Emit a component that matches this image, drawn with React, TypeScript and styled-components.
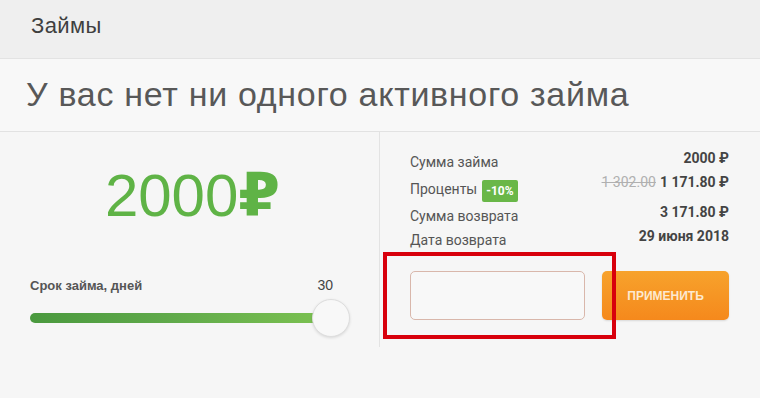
import React from "react";
import styled, { createGlobalStyle } from "styled-components";

const GlobalStyle = createGlobalStyle`
  html, body {
    margin: 0;
    padding: 0;
    background: #f6f6f6;
  }
  body {
    font-family: "Liberation Sans", Arial, sans-serif;
    color: #444;
  }
  * { box-sizing: border-box; }
`;

interface SummaryRow {
  label: string;
  value: string;
  oldValue?: string;
  badge?: string;
}

const rows: SummaryRow[] = [
  { label: "Сумма займа", value: "2000 ₽" },
  { label: "Проценты", value: "1 171.80 ₽", oldValue: "1 302.00", badge: "-10%" },
  { label: "Сумма возврата", value: "3 171.80 ₽" },
  { label: "Дата возврата", value: "29 июня 2018" },
];

const App = () => {
  const days = 30;
  const maxDays = 30;
  return (
    <Page>
      <GlobalStyle />
      <Header>Займы</Header>
      <TitleBar>
        <h1>У вас нет ни одного активного займа</h1>
      </TitleBar>
      <Main>
        <LeftPanel>
          <Amount>
            2000<span className="cur">₽</span>
          </Amount>
          <SliderBlock>
            <SliderHead>
              <span>Срок займа, дней</span>
              <span className="days">{days}</span>
            </SliderHead>
            <Track>
              <Fill style={{ width: `${(days / maxDays) * 100}%` }} />
              <Knob />
            </Track>
          </SliderBlock>
        </LeftPanel>
        <RightPanel>
          <Summary>
            {rows.map((row, i) => (
              <Row key={i} $tall={!!row.badge}>
                <Label>
                  {row.label}
                  {row.badge && <Badge>{row.badge}</Badge>}
                </Label>
                <Value>
                  {row.oldValue && <s>{row.oldValue}</s>}
                  {row.value}
                </Value>
              </Row>
            ))}
          </Summary>
          <PromoForm>
            <PromoInput type="text" />
            <ApplyButton>Применить</ApplyButton>
          </PromoForm>
          <Highlight />
        </RightPanel>
      </Main>
    </Page>
  );
};

const Page = styled.div`
  width: 760px;
  min-height: 398px;
  background: #f6f6f6;
`;
const Header = styled.div`
  height: 59px;
  padding: 13px 31px 0;
  background: #efefef;
  border-bottom: 1px solid #e3e3e3;
  font-size: 22px;
  letter-spacing: 0.4px;
  color: #3f3f3f;
`;
const TitleBar = styled.div`
  height: 73px;
  display: flex;
  align-items: center;
  padding: 0 26px 2px;
  background: #f8f8f8;
  border-bottom: 1px solid #e2e2e2;
  h1 {
    margin: 0;
    font-size: 34px;
    font-weight: 400;
    color: #585858;
    letter-spacing: 0.7px;
  }
`;
const Main = styled.div`
  display: grid;
  grid-template-columns: 379px 1fr;
  height: 215px;
`;
const LeftPanel = styled.div`
  display: flex;
  flex-direction: column;
  padding: 30px 30px 0 30px;
`;
const Amount = styled.div`
  text-align: center;
  font-size: 60px;
  line-height: 66px;
  color: #5fb346;
  padding-left: 6px;
  .cur {
    font-family: "DejaVu Sans", sans-serif;
    font-weight: 700;
    font-size: 60px;
  }
`;
const SliderBlock = styled.div`
  margin-top: 48px;
  width: 320px;
`;
const SliderHead = styled.div`
  display: flex;
  justify-content: space-between;
  align-items: center;
  font-size: 13px;
  font-weight: 700;
  color: #555;
  padding-right: 17px;
  .days {
    font-weight: 400;
    font-size: 14px;
    color: #444;
  }
`;
const Track = styled.div`
  position: relative;
  margin-top: 20px;
  height: 10px;
  width: 300px;
  border-radius: 5px;
`;
const Fill = styled.div`
  height: 100%;
  border-radius: 5px;
  background: linear-gradient(90deg, #4a993e 0%, #5fa94a 45%, #7cc251 100%);
`;
const Knob = styled.div`
  position: absolute;
  right: -20px;
  top: -14px;
  width: 38px;
  height: 38px;
  border-radius: 50%;
  background: #f8f8f8;
  border: 1px solid #dedede;
  box-shadow: 0 1px 3px rgba(0, 0, 0, 0.12);
`;
const RightPanel = styled.div`
  position: relative;
  border-left: 1px solid #e3e3e3;
  padding: 18px 31px 0 30px;
  font-family: Roboto, "Liberation Sans", sans-serif;
`;
const Summary = styled.div`
  display: flex;
  flex-direction: column;
`;
const Row = styled.div<{ $tall: boolean }>`
  display: flex;
  justify-content: space-between;
  align-items: flex-start;
  height: ${(p) => (p.$tall ? "30px" : "24px")};
`;
const Label = styled.div`
  display: flex;
  align-items: center;
  gap: 5px;
  font-size: 14px;
  line-height: 20px;
  color: #555;
  padding-top: 2px;
`;
const Badge = styled.span`
  display: inline-block;
  margin-top: 4px;
  padding: 0 4px;
  height: 22px;
  line-height: 22px;
  border-radius: 2px;
  background: #69b748;
  color: #fff;
  font-size: 12px;
  font-weight: 700;
`;
const Value = styled.div`
  font-size: 14px;
  line-height: 16px;
  font-weight: 700;
  color: #444;
  s {
    font-weight: 400;
    color: #b0b0b0;
    margin-right: 4px;
  }
`;
const PromoForm = styled.div`
  display: flex;
  gap: 17px;
  margin-top: 19px;
`;
const PromoInput = styled.input`
  width: 175px;
  height: 49px;
  border: 1px solid #d9b7ab;
  border-radius: 5px;
  background: #f8f8f8;
  outline: none;
`;
const ApplyButton = styled.button`
  width: 127px;
  height: 49px;
  border: none;
  border-radius: 5px;
  background: linear-gradient(180deg, #f7a22c 0%, #f5891c 100%);
  box-shadow: 0 1px 2px rgba(0, 0, 0, 0.12);
  color: #fde9cf;
  font-family: "Liberation Sans", Arial, sans-serif;
  font-size: 12px;
  font-weight: 700;
  text-transform: uppercase;
  cursor: pointer;
`;
const Highlight = styled.div`
  position: absolute;
  left: 3px;
  top: 120px;
  width: 233px;
  height: 87px;
  border: 4px solid #d8000c;
  pointer-events: none;
`;

export default App;
